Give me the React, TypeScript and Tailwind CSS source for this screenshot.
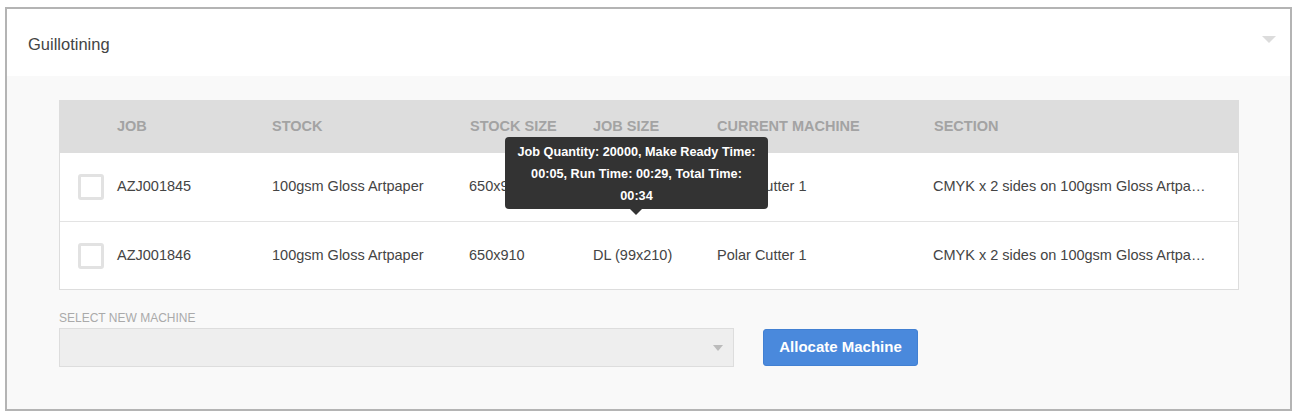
import React from "react";

const cols = "grid-cols-[57px_155px_198px_123px_124px_217px_1fr]";

function Checkbox() {
  return <div className="w-[26px] h-[26px] border-[3px] border-[#e2e2e2] rounded-[3px] bg-white" />;
}

const rows = [
  { job: "AZJ001845", stock: "100gsm Gloss Artpaper", ss: "650x910", js: "DL (99x210)", cm: "Polar Cutter 1", sec: "CMYK x 2 sides on 100gsm Gloss Artpaper" },
  { job: "AZJ001846", stock: "100gsm Gloss Artpaper", ss: "650x910", js: "DL (99x210)", cm: "Polar Cutter 1", sec: "CMYK x 2 sides on 100gsm Gloss Artpaper" },
];

export default function App() {
  return (
    <div className="w-[1298px] h-[417px] bg-white pt-[7px] pl-[5px]" style={{ fontFamily: "'Liberation Sans', Arial, sans-serif" }}>
      <div className="w-[1287px] h-[404px] border-2 border-[#b4b4b4] flex flex-col">
        <div className="h-[67px] bg-white flex items-center justify-between pl-[21px] pr-[14px] pt-[3px] shrink-0">
          <span className="text-[16.5px] text-[#444]">Guillotining</span>
          <svg width="14" height="8" viewBox="0 0 14 8" className="mt-[-8px]">
            <path d="M0 0 L14 0 L7 7 Z" fill="#dcdcdc" />
          </svg>
        </div>
        <div className="flex-1 bg-[#f9f9f9] pt-[24px] pl-[52px] pr-[51px]">
          <div className="relative border border-[#dddddd] border-t-0 bg-white">
            <div className={`grid ${cols} h-[53px] bg-[#dddddd] items-center text-[14.5px] font-bold text-[#a3a3a3] uppercase`}>
              <div />
              <div>Job</div>
              <div>Stock</div>
              <div>Stock Size</div>
              <div>Job Size</div>
              <div>Current Machine</div>
              <div>Section</div>
            </div>
            {rows.map((r, i) => (
              <div key={i} className={`grid ${cols} h-[68px] items-center text-[14.5px] text-[#444] ${i > 0 ? "border-t border-[#e3e3e3]" : ""}`}>
                <div className="pl-[18px]"><Checkbox /></div>
                <div>{r.job}</div>
                <div>{r.stock}</div>
                <div className="-ml-px">{r.ss}</div>
                <div>{r.js}</div>
                <div>{r.cm}</div>
                <div className="truncate pr-[27px] -ml-px">{r.sec}</div>
              </div>
            ))}
            <div className="absolute left-[445px] top-[37px] w-[263px] h-[72px] bg-[#333] rounded-[4px] text-white text-[12.7px] font-bold text-center leading-[22px] pt-[4px] px-[4px]">
              <div className="whitespace-nowrap">Job Quantity: 20000, Make Ready Time:</div>
              <div className="whitespace-nowrap">00:05, Run Time: 00:29, Total Time:</div>
              <div>00:34</div>
              <div className="absolute left-[125px] bottom-[-6px] w-0 h-0 border-l-[6px] border-r-[6px] border-t-[6px] border-l-transparent border-r-transparent border-t-[#333]" />
            </div>
          </div>
          <div className="mt-[19px] text-[12px] text-[#aaa] uppercase">Select New Machine</div>
          <div className="flex items-center mt-[1px]">
            <div className="w-[675px] h-[39px] bg-[#eeeeee] border border-[#dddddd] flex items-center justify-end pr-[10px]">
              <svg width="10" height="6" viewBox="0 0 10 6"><path d="M0 0 L10 0 L5 6 Z" fill="#bbb" /></svg>
            </div>
            <button className="ml-[29px] w-[155px] h-[37px] bg-[#4a89dc] border border-[#4280d2] rounded-[3px] text-white text-[15px] font-bold">Allocate Machine</button>
          </div>
        </div>
      </div>
    </div>
  );
}
